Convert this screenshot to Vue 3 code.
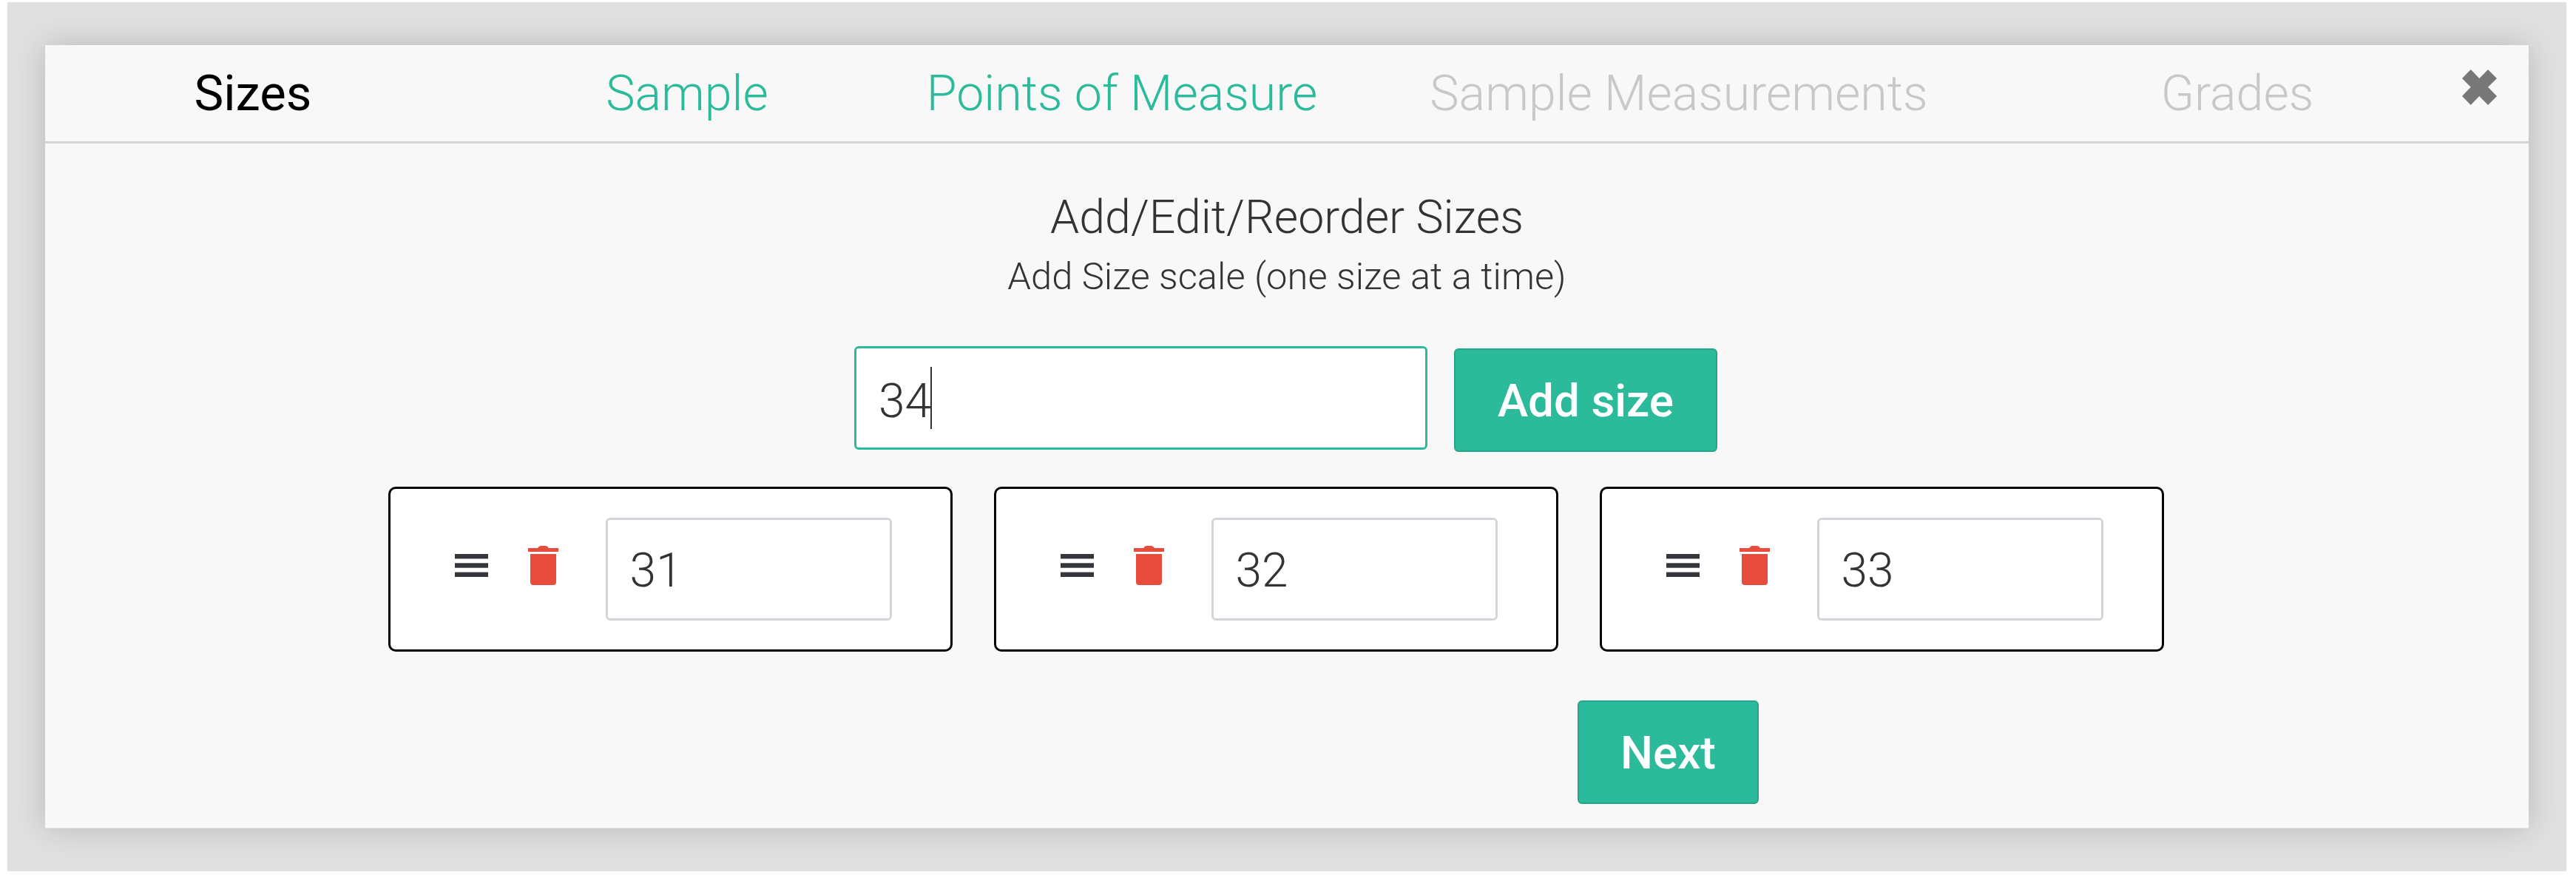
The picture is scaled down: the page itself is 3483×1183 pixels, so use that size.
<template>
  <div class="overlay">
    <div class="modal">
      <div class="tabs">
        <span
          v-for="tab in tabs"
          :key="tab.label"
          class="tab"
          :class="tab.state"
        >{{ tab.label }}</span>
        <svg class="close" viewBox="0 0 47 48">
          <path fill="#777" d="M11.7 0 23.3 12 35 0 47 12 35 23.7 47 36 35 48 23.3 36 11.7 48 0 36 11.7 23.7 0 12z" />
        </svg>
      </div>

      <div class="body">
        <div class="title">Add/Edit/Reorder Sizes</div>
        <div class="subtitle">Add Size scale (one size at a time)</div>

        <div class="add-row">
          <div class="add-input"><span class="add-value">34</span><i class="caret"></i></div>
          <button class="btn add-btn">Add size</button>
        </div>

        <div class="sizes">
          <div v-for="size in sizes" :key="size" class="size-card">
            <svg class="bars" viewBox="0 0 45 31">
              <rect width="45" height="6.4" fill="#33363a" />
              <rect y="12.3" width="45" height="6.4" fill="#33363a" />
              <rect y="24.6" width="45" height="6.4" fill="#33363a" />
            </svg>
            <svg class="trash" viewBox="0 0 41 53">
              <path fill="#e74c3c" d="M13 3Q15 0 17 0H24Q26 0 28 3H41V8H0V3zM3 11H38V49Q38 53 34 53H7Q3 53 3 49z" />
            </svg>
            <div class="size-input">{{ size }}</div>
          </div>
        </div>

        <div class="next-row">
          <button class="btn next-btn">Next</button>
        </div>
      </div>
    </div>
  </div>
</template>

<script setup>
const tabs = [
  { label: 'Sizes', state: 'current' },
  { label: 'Sample', state: 'done' },
  { label: 'Points of Measure', state: 'done' },
  { label: 'Sample Measurements', state: 'todo' },
  { label: 'Grades', state: 'todo' }
]

const sizes = [31, 32, 33]
</script>

<style>
html,
body {
  background: #fff;
}
</style>

<style scoped>
.overlay {
  box-sizing: border-box;
  height: 1175px;
  margin: 3px 13px 0 10px;
  padding: 58px 51px 0;
  background: #e0e0e0;
  font-family: Roboto, "Liberation Sans", sans-serif;
  font-weight: 300;
  color: #333;
}

.modal {
  box-sizing: border-box;
  height: 1059px;
  background: #f8f8f8;
  border-bottom: 1px solid #e6e6e6;
  box-shadow: 0 0 40px rgba(0, 0, 0, 0.18);
}

.tabs {
  position: relative;
  display: grid;
  grid-template-columns: 562px 612px 564px 942px 568px;
  align-items: center;
  height: 130px;
  border-bottom: 3px solid #d2d6da;
  font-size: 66.3px;
}

.tab {
  text-align: center;
  white-space: nowrap;
}

.current {
  color: #000;
  font-size: 67px;
  font-weight: 400;
}

.done {
  color: #2bbb9b;
}

.todo {
  color: #c8c8c8;
}

.close {
  position: absolute;
  top: 33px;
  left: 3268px;
  width: 47px;
  height: 48px;
}

.body {
  display: flex;
  flex-direction: column;
  align-items: center;
}

.title {
  margin-top: 64px;
  font-size: 62.7px;
  line-height: 72px;
}

.subtitle {
  margin-top: 14px;
  font-size: 50.7px;
  line-height: 60px;
}

.add-row {
  display: flex;
  align-items: flex-start;
  gap: 36px;
  margin-top: 64px;
  margin-left: -3px;
}

.add-input {
  box-sizing: border-box;
  display: flex;
  align-items: center;
  width: 775px;
  height: 140px;
  padding-left: 30px;
  background: #fff;
  border: 3px solid #2bbb9b;
  border-radius: 6px;
  font-size: 64px;
  color: #333;
}

.add-value {
  padding-top: 8px;
}

.caret {
  width: 2px;
  height: 84px;
  margin-left: -1px;
  background: #333;
}

.btn {
  box-sizing: border-box;
  height: 140px;
  padding: 0;
  background: #2bbb9b;
  border: 2px solid #27a58a;
  border-radius: 6px;
  font-family: Roboto, "Liberation Sans", sans-serif;
  font-size: 62px;
  font-weight: 500;
  color: #fff;
}

.add-btn {
  width: 356px;
  margin-top: 3px;
}

.sizes {
  display: flex;
  gap: 56px;
  margin-top: 47px;
  margin-left: -30px;
}

.size-card {
  box-sizing: border-box;
  display: flex;
  align-items: center;
  width: 763px;
  height: 223px;
  padding-left: 87px;
  background: #fff;
  border: 3px solid #000;
  border-radius: 10px;
}

.bars {
  width: 45px;
  height: 31px;
  margin-top: -10px;
}

.trash {
  width: 41px;
  height: 53px;
  margin-top: -10px;
  margin-left: 54px;
}

.size-input {
  box-sizing: border-box;
  display: flex;
  align-items: center;
  width: 387px;
  height: 139px;
  margin-left: 64px;
  padding-top: 4px;
  padding-left: 30px;
  border: 3px solid #d2d6da;
  border-radius: 6px;
  font-size: 64px;
}

.next-row {
  box-sizing: border-box;
  display: flex;
  justify-content: flex-start;
  width: 100%;
  margin-top: 66px;
  padding-left: 2072px;
}

.next-btn {
  width: 245px;
}
</style>
